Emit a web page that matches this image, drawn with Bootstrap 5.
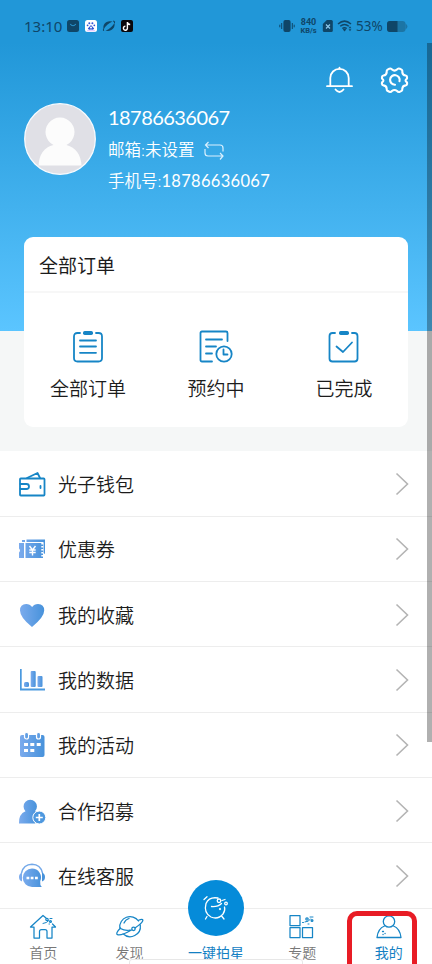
<!DOCTYPE html>
<html lang="zh-CN">
<head>
<meta charset="utf-8">
<meta name="viewport" content="width=device-width, initial-scale=1">
<title>我的</title>
<link href="https://cdn.jsdelivr.net/npm/bootstrap@5.3.0/dist/css/bootstrap.min.css" rel="stylesheet">
<style>
html,body{height:964px;overflow:hidden}
body{font-family:Lato,"Noto Sans CJK SC",sans-serif;font-weight:350;color:#1c1c1c;background:#fff;line-height:1}
svg{display:block;flex:none;overflow:visible}
.phone{width:432px;height:964px}
.hero{height:331px;background:linear-gradient(#2197d8 0,#2197d8 43px,#5bc5ff 331px)}
.statusbar{height:43px;padding:9px 24px 0;color:#0f4668;font-family:"Noto Sans",sans-serif;font-weight:400}
.clock{font-size:15px;width:43px;font-weight:400;white-space:nowrap}
.rate{font-size:9px;line-height:9px;width:19px;font-family:Roboto,sans-serif;font-weight:700}
.rate small{display:block;font-size:7.5px;line-height:8px;white-space:nowrap}
.batt{font-size:13.5px;width:27px;padding-top:1px}
.tools{height:60px;padding:23px 24px 0;gap:28px}
.profile{height:72px;padding-left:24px;gap:12px}
.ava{width:72px;height:72px}
.uid{font-size:20px;line-height:29px;letter-spacing:-.55px;font-weight:400}
.info{font-size:16.5px;line-height:31px;white-space:nowrap}
.info-mail{padding-top:3px}
.tel{font-weight:400;letter-spacing:.3px}
.swap{margin-left:10px}
.orders{background:#f5f7f7;height:120.4px}
.order-card{height:190px;margin:-94px 24px 0;border-radius:9px;background:#fff;position:relative}
.order-title{height:56px;line-height:57px;padding-left:15px;font-size:19px;border-bottom:2px solid #f7f7f7;font-weight:400}
.order-item{font-size:19px;padding-top:37px}
.order-item span{line-height:24px;margin-top:13px}
.menu-row{height:65.33px;padding:1px 23px 0 18px;border-bottom:1.5px solid #ededed;font-size:19px}
.menu-row span{margin-left:12px;line-height:28px;padding-top:2px}
.tabs{height:56px;font-size:14px;color:#777;background:#fff;position:relative}
.tab-item{width:86.4px;padding-top:5px}
.tab-item span{line-height:18px;margin-top:4px}
.tab-on{color:#1380c3;font-weight:400}
.snap{width:56px;height:56px;background:#058bd9;margin-top:-34px}
.tab-item .snap+span{margin-top:8px}
.scroll-thumb{left:427px;top:43px;width:5px;height:699px;background:rgba(0,0,0,.31)}
.outline-box{left:347px;top:911px;width:70px;height:66px;border:5px solid #e81c25;border-radius:10px}
.gesture{left:129px;top:959px;width:174px;height:9px;border:1.5px solid #e7e7e7;border-radius:3px;background:#fff}
.ln{fill:none;stroke:#1685c6;stroke-width:1.8;stroke-linecap:round;stroke-linejoin:round}
.thin{fill:none;stroke:#1685c6;stroke-width:1.25;stroke-linecap:round;stroke-linejoin:round}
.wh{fill:none;stroke:#fff;stroke-width:1.8;stroke-linecap:round;stroke-linejoin:round}
.fine{stroke-width:1.3}
.gear{stroke-width:2.1}
.chev{fill:none;stroke:#b4b4b4;stroke-width:1.6}
</style>
<script src="https://cdn.jsdelivr.net/npm/bootstrap@5.3.0/dist/js/bootstrap.bundle.min.js"></script>
</head>
<body>
<svg width="0" height="0" class="position-absolute" aria-hidden="true"><defs>
<linearGradient id="blue"><stop stop-color="#7babed"/><stop offset="1" stop-color="#4792db"/></linearGradient>
<symbol id="chev" viewBox="0 0 14 24"><path class="chev" d="M1.500 1.500 12.500 12 1.500 22.500"/></symbol>
</defs></svg>
<div class="phone position-relative overflow-hidden">
<header class="hero">
 <div class="statusbar d-flex align-items-center">
  <span class="clock">13:10</span>
  <svg width="12" height="12"><rect width="12" height="12" rx="2.500" fill="#0f4668"/><path d="M3.300 4Q6 7.500 8.800 4" fill="none" stroke="#2995cf" stroke-width="1.200"/></svg>
  <svg class="ms-1" width="14" height="12"><rect x="2" width="12" height="12" rx="2.500" fill="#fff"/><g fill="#3155d5"><circle cx="6.300" cy="3.200" r="1"/><circle cx="9.400" cy="3.200" r="1"/><circle cx="4.600" cy="5.300" r=".9"/><circle cx="11.300" cy="5.300" r=".9"/><path d="M8 4.900 11.200 8.600Q11 10 8 9.500 5 10 4.800 8.600Z"/></g><path d="M4 10.800h8" stroke="#d8b7ff"/><circle cx="8" cy="7.600" r="1" fill="#fff"/></svg>
  <svg class="ms-1" width="15" height="12"><g transform="translate(2 0)" fill="#0f4668"><path d="M.7 9.300C-.6 5 2.200 1.200 6.800 1.200L9.500 1.400Q3.500 3.800.7 9.300Z"/><path d="M11.500 2.800C12.500 7.500 8.800 11.100 5 11L2.500 10.700Q9 8 11.500 2.800Z"/><path d="M1 11Q-.3 10.500.7 8.500M10 1.100Q12.500.8 11.400 3" fill="none" stroke="#0f4668"/></g></svg>
  <svg width="16" height="12" class="ms-1"><rect x="1" width="12" height="12" rx="2" fill="#09080c"/><path d="M7.400 2V8a2 2 0 1 1-2-1.800M7.400 2.200Q8 4.400 10.200 4.500" fill="none" stroke="#fff" stroke-width="1.400"/></svg>
  <svg class="ms-auto" width="16" height="14"><rect x="4.400" y="1" width="7.200" height="12" rx="2" fill="#0f4668"/><path d="M2.700 4v6M13.300 4v6M.8 5.700v2.600M15.200 5.700v2.600" stroke="#0f4668" stroke-width="1"/></svg>
  <span class="rate ms-1 text-center">840<small>KB/s</small></span>
  <svg class="ms-1" width="12" height="12"><path d="M4 0H8.500Q10 0 10 1.500v9Q10 12 8.500 12h-7Q0 12 0 10.500V4Z" transform="translate(.8)" fill="#0f4668"/><path d="M4 4.500 8 8.500M8 4.500 4 8.500" stroke="#8ec8ea" stroke-width="1.200"/></svg>
  <svg class="ms-1" width="14" height="12"><path d="M0 4Q6.500-1.800 13 4M2.200 6.300Q6.500 2.600 10.800 6.300M4.300 8.500Q6.500 6.800 8.800 8.500" fill="none" stroke="#0f4668" stroke-width="1.500"/><path d="M4.800 9.400Q6.500 8 8.300 9.400L6.500 11.500ZM10.600 8.200l1.400-2 1.400 2ZM10.600 9.300l1.400 2 1.400-2Z" fill="#0f4668"/></svg>
  <span class="batt ms-1">53%</span>
  <svg class="ms-1" width="21" height="11"><rect width="18.500" height="11" rx="3" fill="#1c75a5"/><path d="M3 0h7.500v11H3Q0 11 0 8V3Q0 0 3 0Z" fill="#0f4668"/><path d="M18.500 2.500Q22.500 5.500 18.500 8.500Z" fill="#1c75a5"/></svg>
 </div>
 <div class="tools d-flex justify-content-end">
  <svg width="27" height="28"><g class="wh"><path d="M1 20.200H26M4.300 20V12a9.200 9.200 0 0 1 18.400 0v8M9.500 23.500q4 5 8 0"/><path d="M13.500 1.700v1"/></g></svg>
  <svg width="27" height="28" viewBox="0 0 27 28"><g class="wh gear"><path d="M8.400 2.700Q10.100 2 11 3.500q2.500 2.200 5 0Q17 2 18.700 2.700l2.200 1.200q.8.800.4 2.200.2 3.100 3.300 3.400 1.300.2 1.400 1.400v1.700q-2.900 1.800 0 3.800l.1 1.500q-.3 1.300-1.500 1.500-3.100.4-3.300 3.400.2 1.500-.7 2.100l-2 1q-1.500.4-2.500-.9-2.600-2-5.200 0-1 1.300-2.500.8l-2-1q-.9-.7-.7-2.100-.2-2.900-3.200-3.300-1.300-.1-1.600-1.500l.1-1.500q2.800-2 0-3.800v-1.700Q1.200 9.700 2.500 9.500 5.500 9.200 5.700 6.100 5.400 4.700 6.200 3.900Z"/><path d="M14 18.700a4.800 4.800 0 1 1 4.500-3.500"/></g></svg>
 </div>
 <div class="profile d-flex text-white">
  <svg class="ava" viewBox="0 0 72 72"><circle cx="36" cy="36" r="35.300" fill="#e0e0e6" stroke="#f8fbfe" stroke-width="1.300"/><path d="M14.500 62.500q1-17 15-20.500a14.500 14.500 0 1 1 13 0Q56.500 46 57.500 62.500Z" fill="#fcfcfc"/></svg>
  <div><div class="uid">18786636067</div><div class="info info-mail d-flex align-items-center"><span>邮箱:未设置</span><svg class="swap" width="22" height="20" viewBox="0 0 22 20"><path d="M4.500 1 1.500 4 4.500 7M1.500 4H16q3 0 3 3v3.500M1 8v4q0 3 3 3H19M16 12l3 3-3 3.500" fill="none" stroke="#d9f0fe" stroke-width="1.200"/></svg></div><div class="info">手机号:<span class="tel">18786636067</span></div></div>
 </div>
</header>
<section class="orders d-flex flex-column">
 <div class="order-card">
  <div class="order-title">全部订单</div>
  <div class="row g-0 text-center">
   <div class="col-4 order-item d-flex flex-column align-items-center"><svg width="30" height="34"><path class="ln" d="M7 3H4.500Q1 3 1 6.500V28q0 3.500 3.500 3.500h21Q29 31.500 29 28V6.500Q29 3 25.500 3H23M7 10.500H23M7 16.500H23M7 22.800H23"/><rect x="10" y="1" width="10" height="4" rx="1.700" fill="#1685c6"/></svg><span>全部订单</span></div>
   <div class="col-4 order-item d-flex flex-column align-items-center"><svg width="34" height="34"><g class="ln"><path d="M13 31.500H3q-1.500 0-1.500-1.500V3q0-1.500 1.500-1.500H27q1.500 0 1.500 1.500v8M7 9.500H23M7 16.500H17M7 23.500H13"/><circle cx="25" cy="24" r="7.700"/><path d="M24.500 19.500V24.500H28.500"/></g></svg><span>预约中</span></div>
   <div class="col-4 order-item d-flex flex-column align-items-center"><svg width="32" height="34"><path class="ln" d="M7 3H4.500Q1.500 3 1.500 6V28.500q0 3 3 3h22q3 0 3-3V6q0-3-3-3H24M8.500 16.500l6.500 5.500 9-9.500"/><rect x="11" y="1" width="10" height="4" rx="1.700" fill="#1685c6"/></svg><span>已完成</span></div>
  </div>
 </div>
</section>
<main>
 <div class="menu-row d-flex align-items-center"><svg width="28" height="28"><g class="ln"><rect x="2" y="8.500" width="24.500" height="17" rx=".8"/><path d="M9 8 19.500 3 22 8M2.500 14H8.500q2.500 0 2.500 2.500T8.500 19H2.500M22.500 16v2"/></g></svg><span>光子钱包</span><svg class="ms-auto" width="14" height="24"><use href="#chev"/></svg></div>
 <div class="menu-row d-flex align-items-center"><svg width="28" height="28"><g fill="url(#blue)"><path d="M4 5h3v2H4ZM8.500 4.500H27V19l-1.500-1V7H8.500ZM1 8h5V23H1v-5.500q2-2 0-4ZM7.500 8H25V23H7.500Z"/></g><path d="m11.500 11 3 4 3-4M14.500 15v5.500M11.300 15h6.400M11.300 17.500h6.400" fill="none" stroke="#fff" stroke-width="1.400"/><path d="M24.300 8v15" stroke="#fff" stroke-width="2" stroke-dasharray="1.500 1.500"/></svg><span>优惠券</span><svg class="ms-auto" width="14" height="24"><use href="#chev"/></svg></div>
 <div class="menu-row d-flex align-items-center"><svg width="28" height="28"><path d="M14 26Q2 16.500 2 9.500 2 3 8.200 3q3.700 0 5.900 3Q16.200 3 20 3q6.200 0 6.200 6.500T14 26Z" fill="url(#blue)"/></svg><span>我的收藏</span><svg class="ms-auto" width="14" height="24"><use href="#chev"/></svg></div>
 <div class="menu-row d-flex align-items-center"><svg width="28" height="28"><path d="M2 3h1.700V22.500H27v2H2Z" fill="#4a99df"/><g fill="url(#blue)"><rect x="6" y="16" width="5" height="5" rx="1.500"/><rect x="12.700" y="5" width="5" height="16" rx="1"/><rect x="19.500" y="10" width="5" height="11" rx="1"/></g></svg><span>我的数据</span><svg class="ms-auto" width="14" height="24"><use href="#chev"/></svg></div>
 <div class="menu-row d-flex align-items-center"><svg width="28" height="28"><rect x="2" y="4" width="24.500" height="22" rx="2" fill="url(#blue)"/><g fill="url(#blue)" stroke="#fff" stroke-width="1.200"><rect x="6.500" y="1.500" width="4" height="6.500" rx="2"/><rect x="18.500" y="1.500" width="4" height="6.500" rx="2"/></g><path d="M6 13.500h4M12.300 13.500h4M18.700 13.500h4M6 19.500h4M12.300 19.500h4" stroke="#fff" stroke-width="3"/></svg><span>我的活动</span><svg class="ms-auto" width="14" height="24"><use href="#chev"/></svg></div>
 <div class="menu-row d-flex align-items-center"><svg width="28" height="28"><path d="M1 26.500q-.5-9.500 6.500-12.300a6.700 6.700 0 1 1 9.500 0q2.500 1 2 3.500-5 4-1.500 8.800Z" fill="url(#blue)"/><circle cx="21.300" cy="20.500" r="6.500" fill="#4e98df" stroke="#fff"/><path d="M17.800 20.500h7M21.300 17v7" stroke="#fff" stroke-width="1.700"/></svg><span>合作招募</span><svg class="ms-auto" width="14" height="24"><use href="#chev"/></svg></div>
 <div class="menu-row d-flex align-items-center"><svg width="28" height="28"><path d="M3.500 11Q5.500 2.500 14 2.300 22.500 2.500 24.500 11" fill="none" stroke="#74a9e9" stroke-width="1.500"/><path d="M4 10.500v9Q1 18.500 1 15t3-4.500Z" fill="#7babed"/><path d="M24 10.500v9q3-1 3-4.500t-3-4.500Z" fill="#4792db"/><path d="M14 6.500a9 9 0 0 1 8.200 12.800q-.4 4 1.600 5.700H14A9.250 9.250 0 1 1 14 6.500Z" fill="url(#blue)"/><path d="M8.500 16h2.800M12.700 16h2.800M17 16h2.800" stroke="#fff" stroke-width="2.500"/></svg><span>在线客服</span><svg class="ms-auto" width="14" height="24"><use href="#chev"/></svg></div>
</main>
<nav class="tabs d-flex">
 <div class="tab-item d-flex flex-column align-items-center"><svg width="28" height="26"><g class="thin"><path d="M1.500 13 14 1.500 17 4M23.500 10 26.500 13H23V24H18V17.500q0-2-2-2H12.500q-2 0-2 2V24H5V13H1.500"/><path d="M14 9.500q4-.5 6-3M21 4.500h2M20 10h.5" stroke-width="1"/><circle cx="18" cy="5.500" r="1.200"/><circle cx="21.500" cy="7.500" r=".9"/></g></svg><span>首页</span></div>
 <div class="tab-item d-flex flex-column align-items-center"><svg width="28" height="26"><g class="thin"><path d="M3.800 14A10.300 10.300 0 0 1 22.500 7M24.300 11A10.300 10.300 0 0 1 7 19.800M4.500 14Q-1 19.500 1.500 20.700 5 22 15.500 16M19 14Q28.500 7.500 26.500 5.500 25.500 5 22 6.500M4.500 14.500Q9 17 14 16"/><circle cx="17.500" cy="14.800" r="1.700"/><path d="M8 9q1.500-3.500 5-4.500"/></g></svg><span>发现</span></div>
 <div class="tab-item tab-on d-flex flex-column align-items-center"><div class="snap rounded-circle d-flex align-items-center justify-content-center"><svg width="28" height="26" viewBox="0 0 28 26"><g class="wh fine"><path d="M16 3Q7 1.500 4 8.500 1.500 18 9 22q7 3 12-3 2.500-3.500 1.500-7M2 4.500 5 1.800M5 21.500 3.500 24M20 21.500l2 2.500M9.500 11.500Q16 12 19.500 8.500M20 5.500 23 4.500"/><circle cx="17" cy="5.800" r="1.800"/><circle cx="24" cy="8.500" r="1.300"/><path d="M18 13.500v1M17.500 14h1"/></g></svg></div><span>一键拍星</span></div>
 <div class="tab-item d-flex flex-column align-items-center"><svg width="28" height="26"><g class="thin"><rect x="2" y="1.500" width="10" height="10"/><rect x="2" y="13.500" width="10" height="10"/><rect x="14.500" y="13.500" width="10" height="10"/><path d="M14.500 8.500h1M17 8q4 0 5.500-3M22 3h3M20 10h1" stroke-width="1"/><circle cx="19" cy="5" r="1.200"/><circle cx="24" cy="6.500" r=".9"/></g></svg><span>专题</span></div>
 <div class="tab-item tab-on d-flex flex-column align-items-center"><svg width="28" height="26"><g class="thin fine"><circle cx="14" cy="7.500" r="5.700"/><path d="M9.500 12Q3 14.500 2 23.500H26Q25 14.500 18.500 12"/><path d="M7.500 17.500h1M10 19.500h.1M8 20.500h.1"/></g></svg><span>我的</span></div>
</nav>
<div class="gesture position-absolute"></div>
<div class="scroll-thumb position-absolute"></div>
<div class="outline-box position-absolute"></div>
</div>
</body>
</html>
